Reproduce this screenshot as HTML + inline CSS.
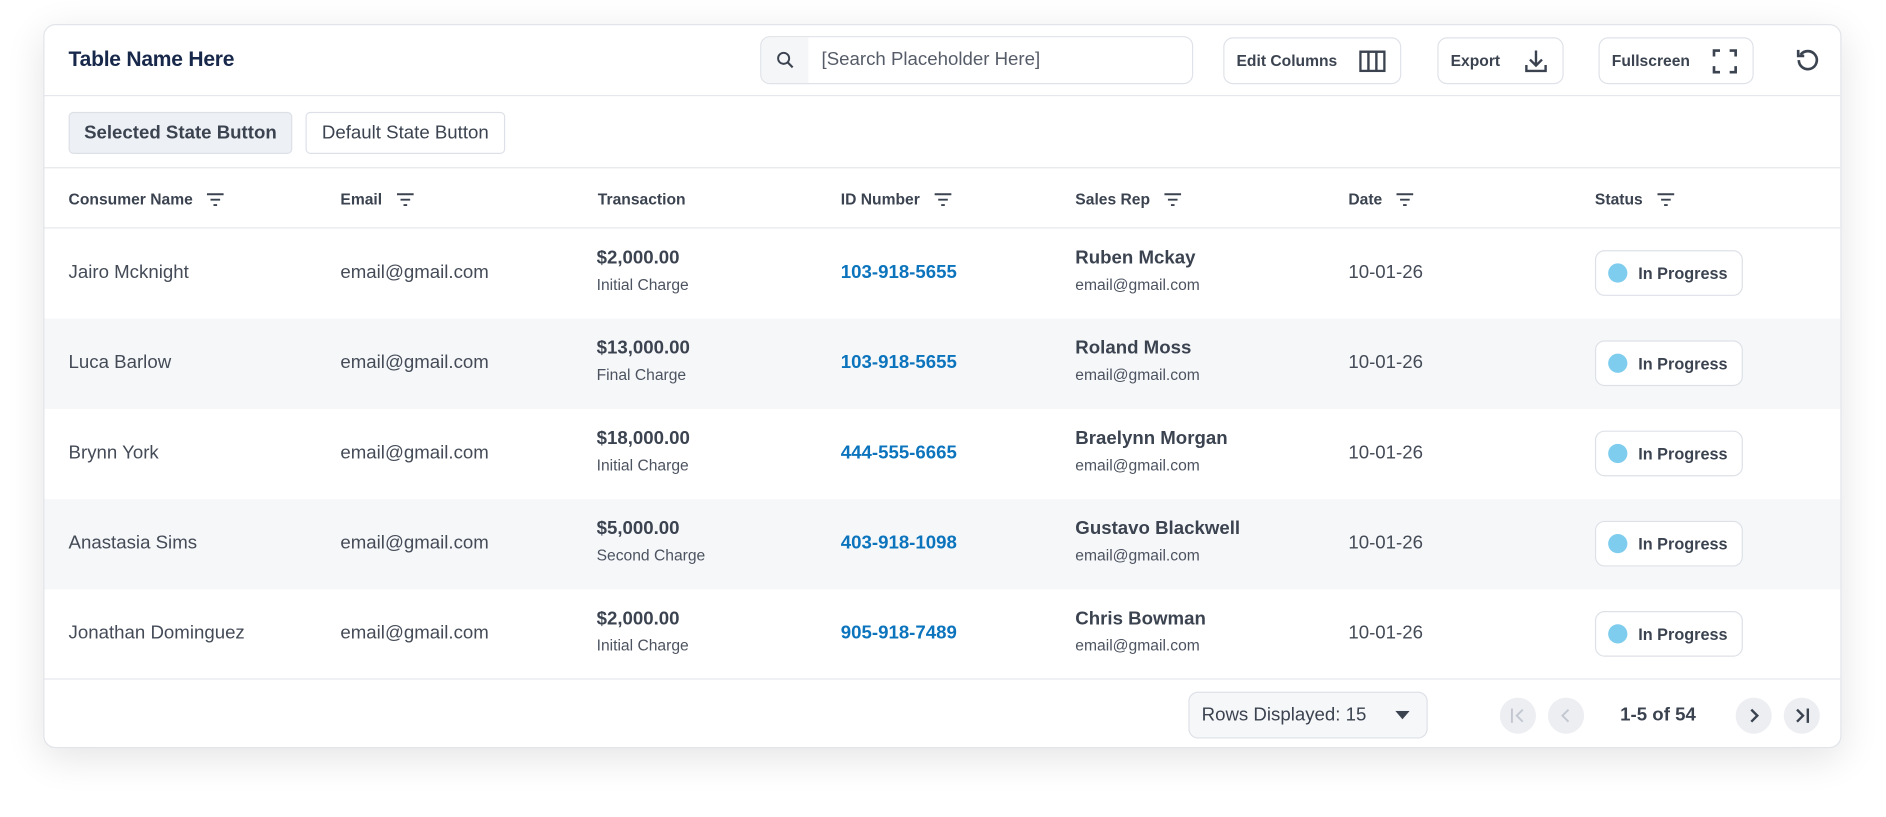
<!DOCTYPE html>
<html><head><meta charset="utf-8"><style>
*{box-sizing:border-box;margin:0;padding:0}
html,body{width:1886px;height:817px;overflow:hidden;background:#fff;font-family:"Liberation Sans",sans-serif;color:#3b4350}
#s{width:1568px;height:679px;transform:scale(1.20281);transform-origin:0 0;position:relative}
.card{position:absolute;left:36px;top:20px;width:1495px;height:602px;border:1px solid #e1e4e9;border-radius:10px;background:#fff;box-shadow:0 8px 32px rgba(0,0,0,.11);overflow:hidden}
.a{position:absolute}
.hl{position:absolute;left:0;right:0;height:1px;background:#e4e7eb}
.title{left:20px;top:18px;font-size:17.5px;font-weight:bold;color:#17284a;letter-spacing:-.2px}
.btn{position:absolute;border:1px solid #dfe2e8;border-radius:8px;background:#fff;font-size:13px;font-weight:bold;color:#3b4350;display:flex;align-items:center;padding-left:10px}
.btn svg{position:absolute;right:12px}
.th{position:absolute;top:137px;font-size:13px;font-weight:bold;color:#3b4350;display:flex;align-items:center;gap:12px}
.row{position:absolute;left:0;right:0;height:75px}
.c{position:absolute;font-size:15.5px;color:#444b57}
.t1{font-size:15.5px;color:#3b4350;font-weight:bold}
.t2{font-size:13px;color:#4c5360;margin-top:5px}
.id{font-weight:bold;color:#0b74bd}
.pill{position:absolute;left:1289px;top:18px;width:123px;height:38px;border:1px solid #dde1e7;border-radius:8px;background:#fff;font-size:13.5px;font-weight:bold;color:#3b4350;display:flex;align-items:center;padding-left:10px;gap:9px}
.dot{width:16px;height:16px;border-radius:50%;background:#7fcdee}
.pg{position:absolute;width:30px;height:30px;border-radius:50%;background:#eceef2;top:14px;display:flex;align-items:center;justify-content:center}
</style></head><body><div id="s">
<div class="card">
 <div class="a title">Table Name Here</div>
 <div class="a" style="left:595px;top:9px;width:360px;height:40px;border:1px solid #dfe2e8;border-radius:8px;overflow:hidden">
  <div class="a" style="left:0;top:0;width:39px;height:38px;background:#f5f6f8"></div>
  <svg class="a" style="left:12px;top:11px" width="16" height="16" viewBox="0 0 16 16"><circle cx="6.5" cy="6.5" r="4.6" fill="none" stroke="#3b4350" stroke-width="1.6"/><path d="M10 10l4 4" stroke="#3b4350" stroke-width="1.8"/></svg>
  <div class="a" style="left:50px;top:10px;font-size:15.5px;color:#555c68">[Search Placeholder Here]</div>
 </div>
 <div class="btn" style="left:980px;top:10px;width:148px;height:39px">Edit Columns<svg width="22" height="18" viewBox="0 0 22 18"><rect x="1" y="1" width="20" height="16" fill="none" stroke="#3b4350" stroke-width="2"/><path d="M7.7 1v16M14.3 1v16" stroke="#3b4350" stroke-width="2"/></svg></div>
 <div class="btn" style="left:1158px;top:10px;width:105px;height:39px">Export<svg width="20" height="20" viewBox="0 0 20 20"><path d="M10 1v12M5 8.5l5 5 5-5M2 13v5h16v-5" fill="none" stroke="#3b4350" stroke-width="2"/></svg></div>
 <div class="btn" style="left:1292px;top:10px;width:129px;height:39px">Fullscreen<svg width="22" height="22" viewBox="0 0 22 22"><path d="M2 7V2h5M15 2h5v5M20 15v5h-5M7 20H2v-5" fill="none" stroke="#3b4350" stroke-width="2.2"/></svg></div>
 <svg class="a" style="left:1455px;top:18px" width="22" height="22" viewBox="0 0 22 22"><path d="M5 6.5A7.5 7.5 0 1 1 3.5 11" fill="none" stroke="#3b4350" stroke-width="2.2"/><path d="M3 2.5v5h5" fill="none" stroke="#3b4350" stroke-width="2.2"/></svg>
 <div class="hl" style="top:58px"></div>
 <div class="a" style="left:20px;top:72px;width:186px;height:35px;border:1px solid #dde1e7;border-radius:4px;background:#edf0f4;font-size:15.5px;font-weight:bold;color:#3b4350;display:flex;align-items:center;justify-content:center">Selected State Button</div>
 <div class="a" style="left:217px;top:72px;width:166px;height:35px;border:1px solid #dde1e7;border-radius:4px;background:#fff;font-size:15.5px;color:#3b4350;display:flex;align-items:center;justify-content:center">Default State Button</div>
 <div class="hl" style="top:118px"></div>
 <div class="th" style="left:20px">Consumer Name <svg width="14" height="12"><path d="M0 1.5h14M3 6h8M5.5 10.5h3" stroke="#3b4350" stroke-width="1.6"/></svg></div>
 <div class="th" style="left:246px">Email <svg width="14" height="12"><path d="M0 1.5h14M3 6h8M5.5 10.5h3" stroke="#3b4350" stroke-width="1.6"/></svg></div>
 <div class="th" style="left:460px">Transaction</div>
 <div class="th" style="left:662px">ID Number <svg width="14" height="12"><path d="M0 1.5h14M3 6h8M5.5 10.5h3" stroke="#3b4350" stroke-width="1.6"/></svg></div>
 <div class="th" style="left:857px">Sales Rep <svg width="14" height="12"><path d="M0 1.5h14M3 6h8M5.5 10.5h3" stroke="#3b4350" stroke-width="1.6"/></svg></div>
 <div class="th" style="left:1084px">Date <svg width="14" height="12"><path d="M0 1.5h14M3 6h8M5.5 10.5h3" stroke="#3b4350" stroke-width="1.6"/></svg></div>
 <div class="th" style="left:1289px">Status <svg width="14" height="12"><path d="M0 1.5h14M3 6h8M5.5 10.5h3" stroke="#3b4350" stroke-width="1.6"/></svg></div>
 <div class="hl" style="top:168px"></div>

 <div class="row" style="top:169px;background:#fff">
  <div class="c" style="left:20px;top:28px">Jairo Mcknight</div><div class="c" style="left:246px;top:28px">email@gmail.com</div>
  <div class="c" style="left:459px;top:16px"><div class="t1">$2,000.00</div><div class="t2">Initial Charge</div></div>
  <div class="c id" style="left:662px;top:28px">103-918-5655</div>
  <div class="c" style="left:857px;top:16px"><div class="t1">Ruben Mckay</div><div class="t2">email@gmail.com</div></div>
  <div class="c" style="left:1084px;top:28px">10-01-26</div>
  <div class="pill"><div class="dot"></div>In Progress</div>
 </div>
 <div class="row" style="top:244px;background:#f6f7f9">
  <div class="c" style="left:20px;top:28px">Luca Barlow</div><div class="c" style="left:246px;top:28px">email@gmail.com</div>
  <div class="c" style="left:459px;top:16px"><div class="t1">$13,000.00</div><div class="t2">Final Charge</div></div>
  <div class="c id" style="left:662px;top:28px">103-918-5655</div>
  <div class="c" style="left:857px;top:16px"><div class="t1">Roland Moss</div><div class="t2">email@gmail.com</div></div>
  <div class="c" style="left:1084px;top:28px">10-01-26</div>
  <div class="pill"><div class="dot"></div>In Progress</div>
 </div>
 <div class="row" style="top:319px;background:#fff">
  <div class="c" style="left:20px;top:28px">Brynn York</div><div class="c" style="left:246px;top:28px">email@gmail.com</div>
  <div class="c" style="left:459px;top:16px"><div class="t1">$18,000.00</div><div class="t2">Initial Charge</div></div>
  <div class="c id" style="left:662px;top:28px">444-555-6665</div>
  <div class="c" style="left:857px;top:16px"><div class="t1">Braelynn Morgan</div><div class="t2">email@gmail.com</div></div>
  <div class="c" style="left:1084px;top:28px">10-01-26</div>
  <div class="pill"><div class="dot"></div>In Progress</div>
 </div>
 <div class="row" style="top:394px;background:#f6f7f9">
  <div class="c" style="left:20px;top:28px">Anastasia Sims</div><div class="c" style="left:246px;top:28px">email@gmail.com</div>
  <div class="c" style="left:459px;top:16px"><div class="t1">$5,000.00</div><div class="t2">Second Charge</div></div>
  <div class="c id" style="left:662px;top:28px">403-918-1098</div>
  <div class="c" style="left:857px;top:16px"><div class="t1">Gustavo Blackwell</div><div class="t2">email@gmail.com</div></div>
  <div class="c" style="left:1084px;top:28px">10-01-26</div>
  <div class="pill"><div class="dot"></div>In Progress</div>
 </div>
 <div class="row" style="top:469px;background:#fff">
  <div class="c" style="left:20px;top:28px">Jonathan Dominguez</div><div class="c" style="left:246px;top:28px">email@gmail.com</div>
  <div class="c" style="left:459px;top:16px"><div class="t1">$2,000.00</div><div class="t2">Initial Charge</div></div>
  <div class="c id" style="left:662px;top:28px">905-918-7489</div>
  <div class="c" style="left:857px;top:16px"><div class="t1">Chris Bowman</div><div class="t2">email@gmail.com</div></div>
  <div class="c" style="left:1084px;top:28px">10-01-26</div>
  <div class="pill"><div class="dot"></div>In Progress</div>
 </div>
 <div class="hl" style="top:543px"></div>
 <div class="a" style="left:951px;top:554px;width:199px;height:39px;border:1px solid #dde1e7;border-radius:8px;background:#f6f7f9;font-size:15.5px;color:#3b4350;display:flex;align-items:center;padding-left:10px">Rows Displayed: 15
  <svg class="a" style="right:14px;top:15px" width="12" height="8"><path d="M0 0h12L6 7z" fill="#3b4350"/></svg></div>
 <div class="pg" style="left:1210px;top:559px"><svg width="16" height="16" viewBox="0 0 16 16"><path d="M3 2v12M12 3L7 8l5 5" fill="none" stroke="#c3c8d0" stroke-width="1.6"/></svg></div>
 <div class="pg" style="left:1250px;top:559px"><svg width="16" height="16" viewBox="0 0 16 16"><path d="M10 3L5 8l5 5" fill="none" stroke="#c3c8d0" stroke-width="1.6"/></svg></div>
 <div class="a" style="left:1310px;top:565px;font-size:15.5px;font-weight:bold;color:#3b4350">1-5 of 54</div>
 <div class="pg" style="left:1406px;top:559px"><svg width="16" height="16" viewBox="0 0 16 16"><path d="M6 3l5 5-5 5" fill="none" stroke="#3b4350" stroke-width="2"/></svg></div>
 <div class="pg" style="left:1446px;top:559px"><svg width="16" height="16" viewBox="0 0 16 16"><path d="M4 3l5 5-5 5M13 2v12" fill="none" stroke="#3b4350" stroke-width="2"/></svg></div>
</div>
</div></body></html>
